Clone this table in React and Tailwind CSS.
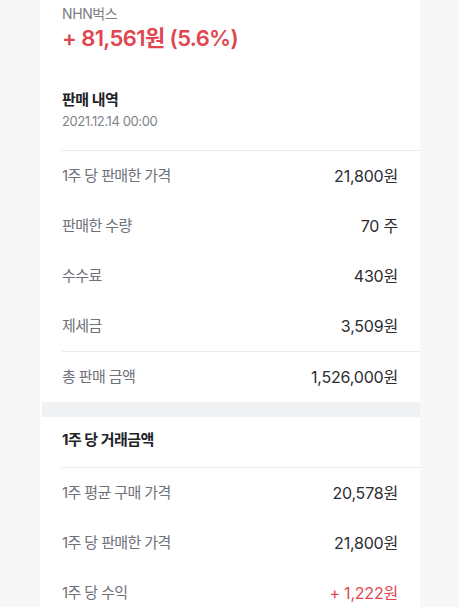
import React from "react";

const font = { fontFamily: "Inter, 'Noto Sans CJK KR', sans-serif" };

function Row({ label, value, red }) {
  return (
    <div className="h-[50px] flex items-center justify-between pr-[22px]">
      <span className="text-[15px] tracking-[-0.6px] text-[#6e7178]">{label}</span>
      <span className={"text-[16px] tracking-[-0.2px] " + (red ? "text-[#e0464e]" : "text-[#2b2d31]")}>
        {value}
      </span>
    </div>
  );
}

function Divider() {
  return <div className="h-px bg-[#e9eaec]" />;
}

export default function App() {
  return (
    <div className="min-h-screen bg-[#f7f7f8]" style={font}>
      <div className="w-[380px] ml-[40px] bg-white min-h-[607px]">
        <div className="pl-[22px]">
          <div className="pt-[4px] pr-[22px]">
            <p className="text-[14px] leading-[20px] tracking-[-0.4px] text-[#7b7e85]">NHN벅스</p>
            <p className="text-[22px] leading-[28px] font-semibold tracking-[-0.6px] text-[#e0464e]">
              + 81,561원 (5.6%)
            </p>
            <p className="mt-[37px] text-[15px] leading-[22px] font-bold tracking-[-0.5px] text-[#222327]">
              판매 내역
            </p>
            <p className="mt-px text-[13px] leading-[18px] tracking-[-0.4px] text-[#80838a] pb-[20px]">
              2021.12.14 00:00
            </p>
          </div>
          <Divider />
          <Row label="1주 당 판매한 가격" value="21,800원" />
          <Row label="판매한 수량" value="70 주" />
          <Row label="수수료" value="430원" />
          <Row label="제세금" value="3,509원" />
          <Divider />
          <Row label="총 판매 금액" value="1,526,000원" />
        </div>
        <div className="h-[15px] ml-[2px] bg-[#f0f1f3]" />
        <div className="pl-[22px]">
          <p className="pt-[12px] pb-[16px] text-[15px] leading-[22px] font-bold tracking-[-0.5px] text-[#222327]">
            1주 당 거래금액
          </p>
          <Divider />
          <Row label="1주 평균 구매 가격" value="20,578원" />
          <Row label="1주 당 판매한 가격" value="21,800원" />
          <Row label="1주 당 수익" value="+ 1,222원" red />
        </div>
      </div>
    </div>
  );
}
